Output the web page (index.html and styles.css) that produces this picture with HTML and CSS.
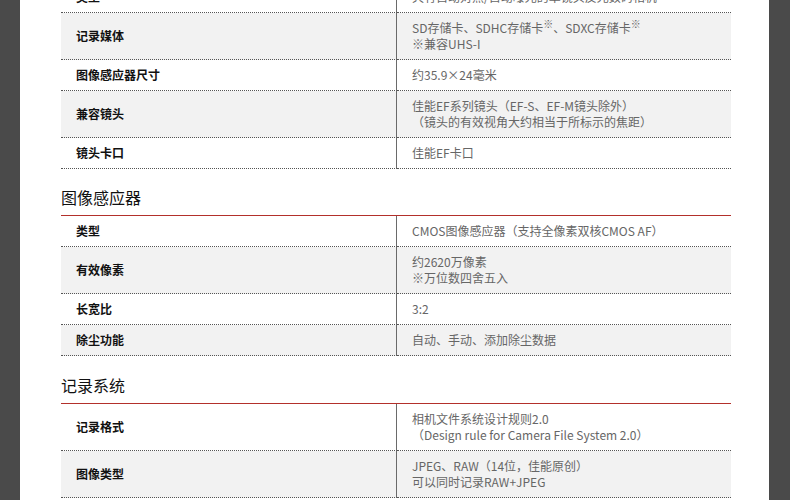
FILE: index.html
```html
<!DOCTYPE html>
<html lang="zh-CN">
<head>
<meta charset="utf-8">
<title>规格</title>
<link rel="stylesheet" href="styles.css">
</head>
<body>
<div class="page">
  <div class="content">
    <table class="spec spec-first">
      <tr><th>类型</th><td>具有自动对焦/自动曝光的单镜头反光数码相机</td></tr>
      <tr class="alt"><th>记录媒体</th><td>SD存储卡、SDHC存储卡<sup>※</sup>、SDXC存储卡<sup>※</sup><br>※兼容UHS-I</td></tr>
      <tr><th>图像感应器尺寸</th><td>约35.9×24毫米</td></tr>
      <tr class="alt"><th>兼容镜头</th><td>佳能EF系列镜头（EF-S、EF-M镜头除外）<br>（镜头的有效视角大约相当于所标示的焦距）</td></tr>
      <tr><th>镜头卡口</th><td>佳能EF卡口</td></tr>
    </table>

    <h2 class="section-title">图像感应器</h2>
    <table class="spec">
      <tr><th>类型</th><td>CMOS图像感应器（支持全像素双核CMOS AF）</td></tr>
      <tr class="alt"><th>有效像素</th><td>约2620万像素<br>※万位数四舍五入</td></tr>
      <tr><th>长宽比</th><td>3:2</td></tr>
      <tr class="alt"><th>除尘功能</th><td>自动、手动、添加除尘数据</td></tr>
    </table>

    <h2 class="section-title section-title-wide">记录系统</h2>
    <table class="spec">
      <tr><th>记录格式</th><td>相机文件系统设计规则2.0<br>（Design rule for Camera File System 2.0）</td></tr>
      <tr class="alt"><th>图像类型</th><td>JPEG、RAW（14位，佳能原创）<br>可以同时记录RAW+JPEG</td></tr>
    </table>
  </div>
</div>
</body>
</html>
```

FILE: styles.css
```css
html, body {
  margin: 0;
  padding: 0;
  background: #4a4a4a;
  height: 100%;
  overflow: hidden;
}

.page {
  display: flow-root;
  margin-left: 20px;
  width: 749px;
  height: 100%;
  background: #ffffff;
}

.content {
  padding: 0 38px 0 41px;
  font-family: "Noto Sans CJK SC", "Liberation Sans", sans-serif;
}

.spec {
  width: 670px;
  border-collapse: separate;
  border-spacing: 0;
  table-layout: fixed;
  border-top: 1px solid #b3302b;
}

.spec-first {
  margin-top: -18px;
  border-top: none;
}

.spec tr.alt {
  background: #f2f2f2;
}

.spec th,
.spec td {
  padding: 7px 15px;
  font-size: 12px;
  line-height: 16px;
  vertical-align: middle;
  text-align: left;
  border-bottom: 1px dotted #555;
}

.spec th {
  width: 305px;
  font-weight: 700;
  color: #111;
  border-right: 1px solid #6a6a6a;
}

.spec td {
  color: #666;
  font-weight: 400;
}

.spec sup {
  font-size: 10px;
  line-height: 0;
  vertical-align: 5px;
}

.section-title {
  margin: 16px 0 6px;
  font-size: 16px;
  line-height: 24px;
  font-weight: 400;
  color: #111;
}

.section-title-wide {
  margin-top: 17px;
}
```
